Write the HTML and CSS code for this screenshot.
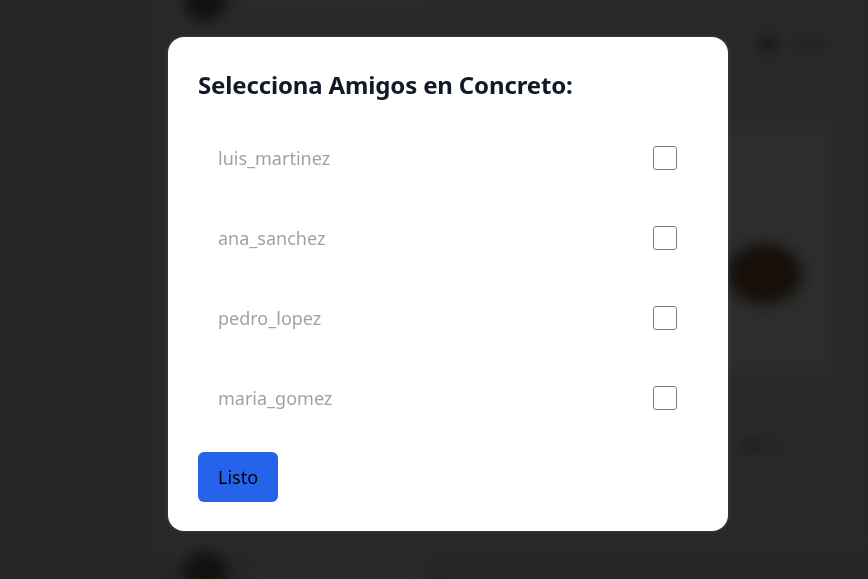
FILE: index.html
```
<!DOCTYPE html>
<html lang="es">
<head>
<meta charset="utf-8">
<title>Selecciona Amigos</title>
<link rel="stylesheet" href="styles.css">
</head>
<body>
<div class="feed" aria-hidden="true">
  <article class="post">
    <header class="post-head">
      <span class="avatar"></span>
      <span class="name-bar"></span>
    </header>
    <div class="post-tools">
      <span class="tool-icon"></span>
      <span class="tool-bar"></span>
    </div>
    <div class="post-media">
      <div class="media-img"><span class="blob"></span></div>
    </div>
    <div class="post-actions">
      <span class="act"></span><span class="act small"></span>
    </div>
  </article>
  <article class="post">
    <header class="post-head">
      <span class="avatar"></span>
      <span class="name-bar"></span>
    </header>
  </article>
</div>

<div class="overlay">
  <div class="modal" role="dialog" aria-labelledby="modal-title">
    <h2 id="modal-title" class="modal-title">Selecciona Amigos en Concreto:</h2>
    <ul class="friend-list">
      <li class="friend-row"><label class="friend-name" for="f1">luis_martinez</label><input class="check" id="f1" type="checkbox"></li>
      <li class="friend-row"><label class="friend-name" for="f2">ana_sanchez</label><input class="check" id="f2" type="checkbox"></li>
      <li class="friend-row"><label class="friend-name" for="f3">pedro_lopez</label><input class="check" id="f3" type="checkbox"></li>
      <li class="friend-row"><label class="friend-name" for="f4">maria_gomez</label><input class="check" id="f4" type="checkbox"></li>
    </ul>
    <button class="btn-done" type="button">Listo</button>
  </div>
</div>
</body>
</html>
```
FILE: styles.css
```
* { box-sizing: border-box; }

html, body {
  margin: 0;
  padding: 0;
  height: 100%;
  overflow: hidden;
}

body {
  background: #262626;
  font-family: "Noto Sans", "Open Sans", sans-serif;
}

/* blurred page behind the dialog */
.feed {
  margin-left: 150px;
  height: 100%;
  background: #292929;
  padding: 0 38px 0 33px;
  filter: blur(7px);
}

.post-head {
  display: flex;
  align-items: center;
  gap: 20px;
  height: 44px;
}

.post:first-child .post-head { margin-top: -22px; }

.avatar {
  width: 44px;
  height: 44px;
  border-radius: 50%;
  background: #131110;
}

.name-bar {
  width: 180px;
  height: 10px;
  border-radius: 4px;
  background: #2c2c2c;
}

.post-tools {
  display: flex;
  justify-content: flex-end;
  align-items: center;
  gap: 12px;
  margin-top: 10px;
  height: 24px;
}

.tool-icon {
  width: 20px;
  height: 20px;
  border-radius: 50%;
  background: #181818;
}

.tool-bar {
  width: 40px;
  height: 10px;
  background: #202020;
  border-radius: 4px;
}

.post-media {
  display: flex;
  justify-content: flex-end;
  margin-top: 70px;
}

.media-img {
  width: 560px;
  height: 245px;
  background: #2b2d2e;
  display: flex;
  justify-content: flex-end;
  align-items: center;
  padding-right: 28px;
}

.blob {
  width: 75px;
  height: 60px;
  border-radius: 50%;
  background: #170f09;
  margin-top: 50px;
}

.post-actions {
  display: flex;
  justify-content: flex-end;
  gap: 8px;
  padding-right: 50px;
  margin-top: 65px;
  height: 20px;
}

.act {
  width: 16px;
  height: 18px;
  border-radius: 50%;
  background: #1c1c1c;
}

.act.small { width: 12px; height: 12px; margin-top: 4px; }

.post + .post { margin-top: 95px; }

/* dialog */
.overlay {
  position: fixed;
  inset: 0;
  padding: 37px 0 0 168px;
}

.modal {
  width: 560px;
  background: #fff;
  border-radius: 16px;
  padding: 32px 30px 29px;
  box-shadow: 0 0 4px rgba(255, 255, 255, 0.15);
}

.modal-title {
  margin: 0;
  font-size: 24px;
  line-height: 32px;
  font-weight: 700;
  color: #111827;
  letter-spacing: -0.15px;
}

.friend-list {
  list-style: none;
  margin: 29px 0 0;
  padding: 0;
  display: flex;
  flex-direction: column;
  gap: 24px;
}

.friend-row {
  display: flex;
  justify-content: space-between;
  align-items: center;
  padding: 16px 21px 16px 20px;
}

.friend-name {
  font-size: 18px;
  line-height: 24px;
  color: #9ca3af;
}

.check {
  appearance: none;
  -webkit-appearance: none;
  margin: 0;
  width: 24px;
  height: 24px;
  border: 1.5px solid #7d7d7d;
  border-radius: 3px;
  background: #fff;
}

.btn-done {
  margin-top: 26px;
  width: 80px;
  height: 50px;
  border: 0;
  border-radius: 6px;
  background: #2563eb;
  color: #000;
  font-family: inherit;
  font-size: 18px;
  padding: 0;
}
```
